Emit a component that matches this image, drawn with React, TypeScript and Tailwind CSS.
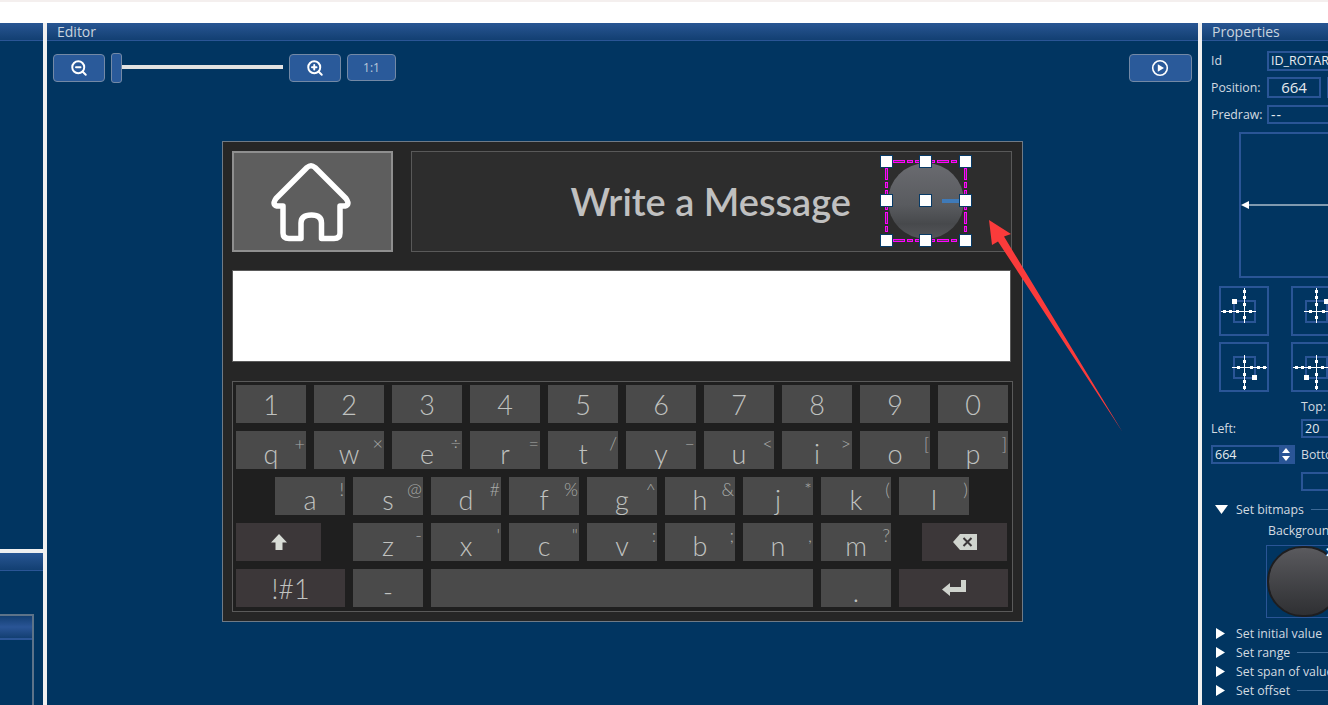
import { ZoomIn, ZoomOut } from "lucide-react";

const uiFont = "font-['Open_Sans',sans-serif]";

type KeyDef = { label?: string; sup?: string; w?: string; dark?: boolean; icon?: "shift" | "back" | "enter" };

const numberRow: KeyDef[] = "1234567890".split("").map((n) => ({ label: n }));
const qRow: KeyDef[] = [
  { label: "q", sup: "+" },
  { label: "w", sup: "×" },
  { label: "e", sup: "÷" },
  { label: "r", sup: "=" },
  { label: "t", sup: "/" },
  { label: "y", sup: "–" },
  { label: "u", sup: "<" },
  { label: "i", sup: ">" },
  { label: "o", sup: "[" },
  { label: "p", sup: "]" },
];
const aRow: KeyDef[] = [
  { label: "a", sup: "!" },
  { label: "s", sup: "@" },
  { label: "d", sup: "#" },
  { label: "f", sup: "%" },
  { label: "g", sup: "^" },
  { label: "h", sup: "&" },
  { label: "j", sup: "*" },
  { label: "k", sup: "(" },
  { label: "l", sup: ")" },
];
const zRow: KeyDef[] = [
  { label: "z", sup: "-" },
  { label: "x", sup: "'" },
  { label: "c", sup: '"' },
  { label: "v", sup: ":" },
  { label: "b", sup: ";" },
  { label: "n", sup: "," },
  { label: "m", sup: "?" },
];

function KeyIcon({ icon }: { icon: "shift" | "back" | "enter" }) {
  if (icon === "shift") {
    return (
      <svg width="18" height="18" viewBox="0 0 18 18">
        <path d="M9 1 L17 9.5 H12.5 V17 H5.5 V9.5 H1 Z" fill="#d8dcd6" />
      </svg>
    );
  }
  if (icon === "back") {
    return (
      <svg width="26" height="18" viewBox="0 0 26 18">
        <path d="M8 1 H25 V17 H8 L1 9 Z" fill="#d0d4ce" />
        <path d="M11.5 5 L19.5 13 M19.5 5 L11.5 13" stroke="#3c3739" strokeWidth="2" />
      </svg>
    );
  }
  return (
    <svg width="26" height="18" viewBox="0 0 26 18">
      <path d="M25 1 V13 H9 V17 L1 10.5 L9 4 V8 H20 V1 Z" fill="#cfd3cd" />
    </svg>
  );
}

function Key({ k }: { k: KeyDef }) {
  const isNumber = k.label && /^[0-9]$/.test(k.label);
  return (
    <div
      className={`relative h-[38px] shrink-0 flex items-center justify-center text-[#c0c2c0] text-[27px] font-light ${k.w ?? "w-[70px]"} ${k.dark ? "bg-[#3c3739]" : "bg-[#4a4a4a]"}`}
    >
      {k.icon ? (
        <KeyIcon icon={k.icon} />
      ) : (
        <span className={isNumber || k.dark ? "leading-none" : "leading-none mt-[7px]"}>{k.label}</span>
      )}
      {k.sup && (
        <span className="absolute right-[1px] top-[3px] text-[18px] font-light leading-none text-[#a9aba9]">{k.sup}</span>
      )}
    </div>
  );
}

function KeyRow({ keys, className }: { keys: KeyDef[]; className?: string }) {
  return (
    <div className={`flex gap-2 ${className ?? ""}`}>
      {keys.map((k, i) => (
        <Key key={i} k={k} />
      ))}
    </div>
  );
}

function Keyboard() {
  return (
    <div className="mt-[19px] w-[781px] h-[231px] border border-[#5a5a5a] bg-[#1f1f1f] p-[3px] flex flex-col gap-2 font-['Lato',sans-serif]">
      <KeyRow keys={numberRow} />
      <KeyRow keys={qRow} />
      <KeyRow keys={aRow} className="ml-[39px]" />
      <div className="flex">
        <Key k={{ icon: "shift", dark: true, w: "w-[85px]" }} />
        <KeyRow keys={zRow} className="ml-[32px]" />
        <div className="ml-[31px]">
          <Key k={{ icon: "back", dark: true, w: "w-[85px]" }} />
        </div>
      </div>
      <KeyRow
        keys={[
          { label: "!#1", dark: true, w: "w-[109px]" },
          { label: "-" },
          { label: "", w: "w-[382px]" },
          { label: "." },
          { icon: "enter", dark: true, w: "w-[109px]" },
        ]}
      />
    </div>
  );
}

function HomeIcon() {
  return (
    <svg className="-ml-[4px]" width="84" height="84" viewBox="269 160 84 84" fill="none">
      <path
        d="M307 167.5 Q311 164 315 167.5 L346 198.5 Q351 206 343 206 H340 V233 Q340 238.5 334 238.5 H321.5 V223 Q321.5 215 311.5 215 Q301 215 301 223 V238.5 H289 Q283 238.5 283 233 V206 H279 Q271 206 276 198.5 Z"
        stroke="#ffffff"
        strokeWidth="5.5"
        strokeLinejoin="round"
      />
    </svg>
  );
}

// knob with the editor's selection frame drawn over it
function SelectedKnob() {
  const handles = [
    [7.5, 7.5],
    [46.5, 7.5],
    [86.5, 7.5],
    [7.5, 46.5],
    [46.5, 46.5],
    [86.5, 46.5],
    [7.5, 86.5],
    [46.5, 86.5],
    [86.5, 86.5],
  ];
  const edges = [
    [14, 7.5, 80, 7.5],
    [14, 86.5, 80, 86.5],
    [7.5, 14, 7.5, 80],
    [86.5, 14, 86.5, 80],
  ];
  return (
    <svg className="absolute left-[467px] top-[2px]" width="94" height="94" viewBox="0 0 94 94">
      <defs>
        <linearGradient id="knobFace" x1="0" y1="0" x2="0" y2="1">
          <stop offset="0" stopColor="#6a6b70" />
          <stop offset="0.55" stopColor="#595b5f" />
          <stop offset="0.8" stopColor="#47494c" />
          <stop offset="1" stopColor="#55565a" />
        </linearGradient>
      </defs>
      <circle cx="47" cy="47" r="38" fill="url(#knobFace)" />
      <rect x="63" y="45" width="19" height="4" fill="#3f7ab8" />
      {edges.map(([x1, y1, x2, y2], i) => (
        <g key={i}>
          <line x1={x1} y1={y1} x2={x2} y2={y2} stroke="#ff00ff" strokeWidth="3" strokeDasharray="12 2 6 2" />
          <line x1={x1} y1={y1} x2={x2} y2={y2} stroke="#5a3a5a" strokeWidth="1" strokeDasharray="10 4 4 4" strokeDashoffset="-1" />
        </g>
      ))}
      {handles.map(([x, y], i) => (
        <rect key={i} x={x - 6} y={y - 6} width="12" height="12" fill="#ffffff" stroke="#073a66" strokeWidth="1" />
      ))}
    </svg>
  );
}

function RedArrow() {
  return (
    <svg className="absolute left-[980px] top-[212px] pointer-events-none" width="150" height="226" viewBox="980 212 150 226">
      <path d="M989 220 L1011 234 L1004 236.5 L1122.5 432 L998 241.5 L992 245 Z" fill="#fb3b3b" />
    </svg>
  );
}

function Device() {
  return (
    <div className="ml-[175px] mt-[58px] w-[801px] h-[481px] bg-[#262626] border border-[#6f7a86] p-[9px]">
      <div className="flex gap-[18px]">
        <div className="w-[161px] h-[101px] bg-[#5e5e5e] border-2 border-[#8f8f8f] flex items-center justify-center">
          <HomeIcon />
        </div>
        <div className="relative w-[601px] h-[101px] bg-[#2d2d2d] border border-[#595959] flex items-center justify-end pr-[160px] font-['Lato',sans-serif] text-[38px] font-semibold text-[#c0c0c0]">
          Write a Message
          <SelectedKnob />
        </div>
      </div>
      <div className="mt-[18px] w-[779px] h-[92px] bg-white border border-[#5a5a5a]" />
      <Keyboard />
    </div>
  );
}

function PanelHeader({ title }: { title?: string }) {
  return (
    <div className={`h-[18px] shrink-0 pl-[10px] bg-gradient-to-b from-[#285693] to-[#123f72] border-b border-[#2a5596] text-[14px] leading-[17px] text-[#c9d4de] ${uiFont}`}>
      {title}
    </div>
  );
}

function ToolButton({ children, w }: { children: React.ReactNode; w: string }) {
  return (
    <div className={`h-[28px] mt-px shrink-0 flex items-center justify-center rounded-[4px] bg-[#2a5a9a] border border-[#7389a6] ${w}`}>
      {children}
    </div>
  );
}

function Toolbar() {
  return (
    <div className="flex mt-3 pl-[6px] pr-[6px] h-[30px]">
      <ToolButton w="w-[52px]">
        <ZoomOut size={18} strokeWidth={2.6} color="#ffffff" />
      </ToolButton>
      <div className="ml-[6px] w-[11px] h-[30px] rounded-[3px] bg-[#2a5a9a] border border-[#7389a6]" />
      <div className="w-[161px] h-[4px] mt-[12px] bg-[#e2e2e2]" />
      <div className="ml-[6px]">
        <ToolButton w="w-[52px]">
          <ZoomIn size={18} strokeWidth={2.6} color="#ffffff" />
        </ToolButton>
      </div>
      <div className="ml-[6px]">
        <div className={`w-[49px] h-[27px] mt-px flex items-center justify-center rounded-[4px] bg-[#2a5a9a] border border-[#7389a6] text-[12px] text-[#b9c9da] ${uiFont}`}>
          1:1
        </div>
      </div>
      <div className="ml-auto">
        <ToolButton w="w-[63px]">
          <svg className="-ml-[2px]" width="18" height="18" viewBox="0 0 18 18" fill="none">
            <circle cx="9" cy="9" r="7.3" stroke="#ffffff" strokeWidth="1.6" />
            <path d="M6.8 5.2 L13 9 L6.8 12.8 Z" fill="#ffffff" />
          </svg>
        </ToolButton>
      </div>
    </div>
  );
}

function PropLabel({ children, className }: { children: React.ReactNode; className?: string }) {
  return <span className={`text-[12.3px] leading-[16px] text-[#d3dae0] whitespace-nowrap ${className ?? ""}`}>{children}</span>;
}

function AnchorIcon({ sx, sy }: { sx: number; sy: number }) {
  const ticks = [-20, -14, -7, 6];
  const hx1 = 25 + sx * 23;
  const hx2 = 25 - sx * 12;
  const vy1 = 25 + sy * 23;
  const vy2 = 25 - sy * 12;
  return (
    <div className="w-[50px] h-[50px] shrink-0 border-2 border-[#2a5596]">
      <svg className="-m-[2px]" width="50" height="50" viewBox="0 0 50 50">
        <rect x="15" y="15" width="21" height="21" fill="none" stroke="#2a5596" strokeWidth="2" />
        <line x1={hx1} y1="25.5" x2={hx2} y2="25.5" stroke="#ffffff" />
        <line x1="25.5" y1={vy1} x2="25.5" y2={vy2} stroke="#ffffff" />
        {ticks.map((t) => (
          <rect key={`h${t}`} x={25 - sx * t - 1} y="24" width="3" height="3" fill="#ffffff" />
        ))}
        {ticks.map((t) => (
          <rect key={`v${t}`} x="24" y={25 - sy * t - 1} width="3" height="3" fill="#ffffff" />
        ))}
        <rect x={sx < 0 ? 13 : 33} y={sy < 0 ? 13 : 33} width="5" height="5" fill="#ffffff" />
      </svg>
    </div>
  );
}

function SectionRow({ title, open, className }: { title: string; open?: boolean; className?: string }) {
  return (
    <div className={`flex items-center h-[19px] ${className ?? ""}`}>
      <div className="w-[34px] pl-[13px] shrink-0">
        {open ? (
          <svg width="13" height="9" viewBox="0 0 13 9">
            <path d="M0 0 H13 L6.5 9 Z" fill="#ffffff" />
          </svg>
        ) : (
          <svg className="ml-px" width="9" height="11" viewBox="0 0 9 11">
            <path d="M0 0 L9 5.5 L0 11 Z" fill="#ffffff" />
          </svg>
        )}
      </div>
      <PropLabel>{title}</PropLabel>
      <div className="ml-[7px] w-[80px] h-px bg-[#3c6996] shrink-0" />
    </div>
  );
}

function Properties() {
  const box = "border-2 border-[#2a5596] shrink-0";
  return (
    <div className={`w-[126px] shrink-0 bg-[#013561] overflow-hidden ${uiFont}`}>
      <PanelHeader title="Properties" />
      <div className="w-[240px]">
        <div className="mt-[10px] flex items-center h-[20px]">
          <PropLabel className="ml-[9px] w-[56px]">Id</PropLabel>
          <div className={`${box} w-[120px] h-[20px] pl-[2px] text-[12.5px] leading-[16px] text-[#e6ebef]`}>ID_ROTARY</div>
        </div>
        <div className="mt-[6px] flex items-center h-[21px]">
          <PropLabel className="ml-[9px] w-[56px]">Position:</PropLabel>
          <div className={`${box} w-[54px] h-[21px] text-center text-[15px] leading-[17px] text-[#e6ebef]`}>664</div>
          <div className={`${box} ml-[6px] w-[54px] h-[21px]`} />
        </div>
        <div className="mt-[7px] flex items-center h-[19px]">
          <PropLabel className="ml-[9px] w-[56px]">Predraw:</PropLabel>
          <div className={`${box} w-[120px] h-[19px] pl-[2px] text-[14px] tracking-[1px] leading-[15px] text-[#e6ebef]`}>--</div>
        </div>
        <div className={`${box} relative mt-2 ml-[37px] w-[150px] h-[146px]`}>
          <svg className="absolute left-0 top-[65px]" width="150" height="12" viewBox="0 0 150 12">
            <path d="M0 6 L8 2 V10 Z" fill="#ffffff" />
            <line x1="6" y1="6" x2="150" y2="6" stroke="#ffffff" />
          </svg>
        </div>
        <div className="mt-2 ml-[17px] flex gap-[22px]">
          <AnchorIcon sx={-1} sy={-1} />
          <AnchorIcon sx={1} sy={-1} />
        </div>
        <div className="mt-[6px] ml-[17px] flex gap-[22px]">
          <AnchorIcon sx={1} sy={1} />
          <AnchorIcon sx={-1} sy={1} />
        </div>
        <div className="flex">
          <div className="ml-[9px] w-[90px] shrink-0">
            <div className="mt-[23px] h-[16px]">
              <PropLabel>Left:</PropLabel>
            </div>
            <div className={`${box} mt-[14px] w-[84px] h-[19px] flex`}>
              <div className="flex-1 pl-[2px] text-[12.5px] leading-[15px] text-[#e6ebef]">664</div>
              <div className="w-[14px] bg-[#2a5596] flex flex-col items-center justify-center gap-[3px]">
                <svg width="8" height="5" viewBox="0 0 8 5">
                  <path d="M4 0 L8 5 H0 Z" fill="#ffffff" />
                </svg>
                <svg width="8" height="5" viewBox="0 0 8 5">
                  <path d="M0 0 H8 L4 5 Z" fill="#ffffff" />
                </svg>
              </div>
            </div>
          </div>
          <div>
            <div className="mt-px h-[16px]">
              <PropLabel>Top:</PropLabel>
            </div>
            <div className={`${box} mt-[10px] w-[80px] h-[19px] pl-[2px] text-[12.5px] leading-[15px] text-[#e6ebef]`}>20</div>
            <div className="mt-[3px] h-[16px]">
              <PropLabel>Bottom:</PropLabel>
            </div>
            <div className={`${box} mt-[15px] w-[80px] h-[19px]`} />
          </div>
        </div>
        <SectionRow title="Set bitmaps" open className="mt-[9px]" />
        <div className="-mt-[2px] ml-[66px] h-[17px]">
          <PropLabel>Background</PropLabel>
        </div>
        <div className="relative mt-[11px] ml-[64px] w-[120px] h-[73px] border border-[#2a5596]">
          <div className="w-[74px] h-[71px] rounded-full border-2 border-[#1e1e20] bg-gradient-to-b from-[#5a5a5e] to-[#2f3033]" />
          <span className="absolute left-[58px] top-0 text-[13px] leading-[13px] font-bold text-white">✕</span>
        </div>
        <SectionRow title="Set initial value" className="mt-[6px]" />
        <SectionRow title="Set range" />
        <SectionRow title="Set span of value" />
        <SectionRow title="Set offset" />
      </div>
    </div>
  );
}

function LeftColumn() {
  return (
    <div className="w-[43px] shrink-0 flex flex-col gap-1 bg-[#f0f0f0]">
      <div className="h-[526px] bg-[#013561]">
        <PanelHeader />
      </div>
      <div className="flex-1 bg-[#013561]">
        <PanelHeader />
        <div className="mt-[43px] w-[34px] h-[100px] border-t-2 border-r-2 border-[#5d7389]">
          <div className="h-[24px] bg-gradient-to-b from-[#123f72] via-[#2a5596] to-[#123f72] border-b-2 border-[#2a5596]" />
        </div>
      </div>
    </div>
  );
}

export default function App() {
  return (
    <div className="relative w-[1328px] h-[705px] overflow-hidden flex flex-col bg-white">
      <div className="h-[23px] shrink-0 border-t-2 border-[#f4efee] bg-white" />
      <div className="flex flex-1 gap-1 bg-[#f0f0f0]">
        <LeftColumn />
        <div className="w-[1151px] shrink-0 bg-[#013561]">
          <PanelHeader title="Editor" />
          <Toolbar />
          <Device />
        </div>
        <Properties />
      </div>
      <RedArrow />
    </div>
  );
}
